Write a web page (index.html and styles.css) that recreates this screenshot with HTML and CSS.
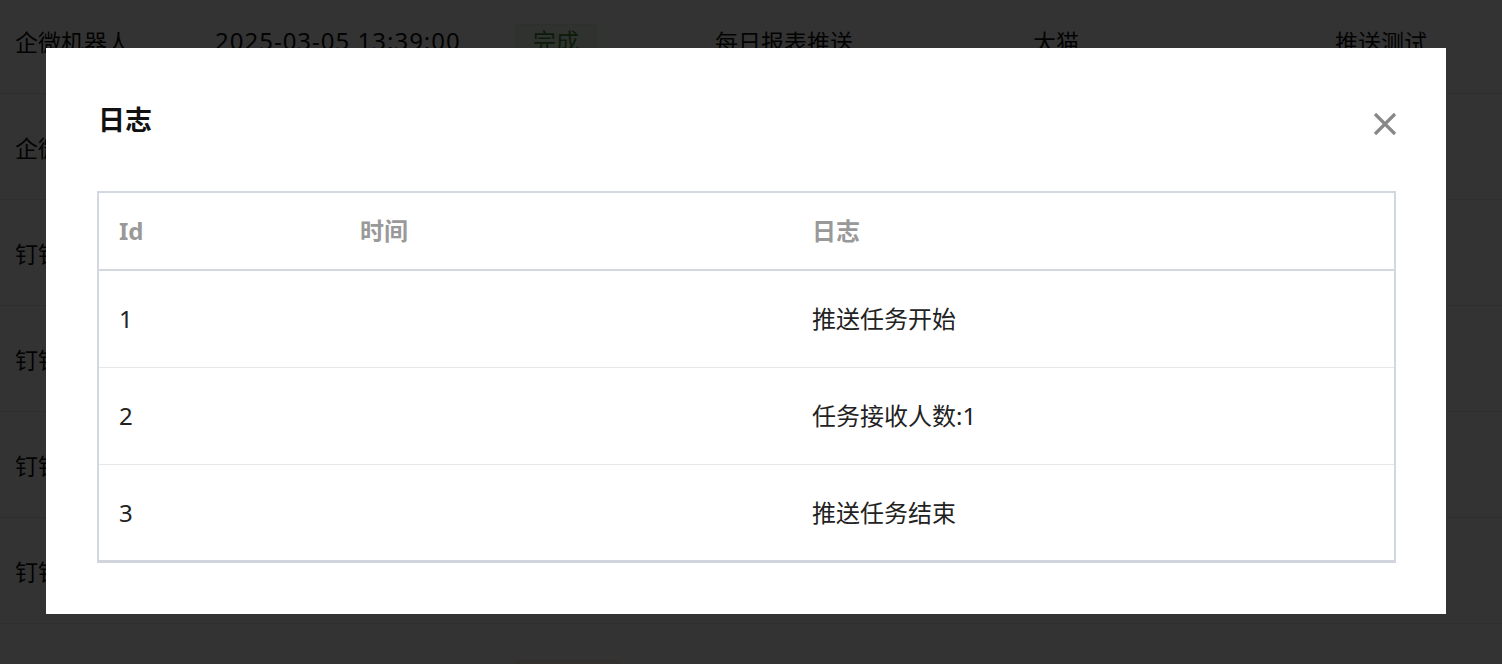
FILE: index.html
```html
<!DOCTYPE html>
<html lang="zh-CN">
<head>
  <meta charset="UTF-8">
  <meta name="viewport" content="width=device-width, initial-scale=1.0">
  <title>推送记录</title>
  <link rel="stylesheet" href="styles.css">
</head>
<body>
  <div class="page">
    <div class="bg-row">
      <span>企微机器人</span><span class="time">2025-03-05 13:39:00</span><span><em class="tag tag-ok">完成</em></span><span>每日报表推送</span><span>大猫</span><span>推送测试</span>
    </div>
    <div class="bg-row">
      <span>企微机器人</span><span class="time">2025-03-05 13:20:00</span><span><em class="tag tag-ok">完成</em></span><span>每日报表推送</span><span>大猫</span><span>推送测试</span>
    </div>
    <div class="bg-row">
      <span>钉钉机器人</span><span class="time">2025-03-05 12:00:00</span><span><em class="tag tag-ok">完成</em></span><span>每日报表推送</span><span>大猫</span><span>推送测试</span>
    </div>
    <div class="bg-row">
      <span>钉钉机器人</span><span class="time">2025-03-05 11:00:00</span><span><em class="tag tag-ok">完成</em></span><span>每日报表推送</span><span>大猫</span><span>推送测试</span>
    </div>
    <div class="bg-row">
      <span>钉钉机器人</span><span class="time">2025-03-05 10:00:00</span><span><em class="tag tag-ok">完成</em></span><span>每日报表推送</span><span>大猫</span><span>推送测试</span>
    </div>
    <div class="bg-row">
      <span>钉钉机器人</span><span class="time">2025-03-05 09:00:00</span><span><em class="tag tag-ok">完成</em></span><span>每日报表推送</span><span>大猫</span><span>推送测试</span>
    </div>
    <div class="bg-row">
      <span>钉钉机器人</span><span class="time">2025-03-05 08:00:00</span><span><em class="tag tag-warn">进行中</em></span><span>每日报表推送</span><span>大猫</span><span>推送测试</span>
    </div>
  </div>

  <div class="overlay">
    <div class="modal">
      <div class="modal-head">
        <h2>日志</h2>
        <button class="close" type="button" aria-label="关闭">
          <svg width="24" height="24" viewBox="0 0 24 24"><path d="M2 2 L22 22 M22 2 L2 22" stroke="#888" stroke-width="3.2" fill="none"/></svg>
        </button>
      </div>

      <div class="log-table">
        <div class="log-row log-header">
          <div>Id</div><div>时间</div><div>日志</div>
        </div>
        <div class="log-row">
          <div>1</div><div></div><div>推送任务开始</div>
        </div>
        <div class="log-row">
          <div>2</div><div></div><div>任务接收人数:1</div>
        </div>
        <div class="log-row">
          <div>3</div><div></div><div>推送任务结束</div>
        </div>
      </div>
    </div>
  </div>
</body>
</html>
```

FILE: styles.css
```css
* { box-sizing: border-box; }
body { margin: 0; background: #fff; color: #111; font-family: "Noto Sans", "Noto Sans CJK SC", sans-serif; font-size: 23px; overflow: hidden; }

.page { margin-top: -12px; height: 676px; overflow: hidden; }
.bg-row { display: grid; grid-template-columns: 200px 300px 200px 318px 302px 1fr; align-items: center; height: 106px; padding-left: 15px; border-bottom: 1px solid #e6e6e6; }
.bg-row .time { font-size: 24px; letter-spacing: 1px; }
.tag { display: inline-block; font-style: normal; height: 34px; line-height: 32px; padding: 0 17px; border-radius: 3px; font-size: 23px; }
.tag-ok { background: #eef8ea; border: 1px solid #e1f3d8; color: #3f8a32; }
.tag-warn { background: #fdf6ec; border: 1px solid #faecd8; color: #e6a23c; }

.overlay { position: fixed; inset: 0; background: rgba(0,0,0,0.8); padding: 48px 0 0 46px; }
.modal { width: 1400px; background: #fff; padding: 50px 50px 51px 51px; }
.modal-head { display: flex; align-items: center; justify-content: space-between; height: 44px; margin-bottom: 49px; }
.modal-head h2 { margin: 0 0 0 1px; font-size: 27px; font-weight: bold; color: #111; line-height: 44px; }
.close { border: 0; background: none; padding: 0; margin: 8px -1px 0 0; width: 24px; height: 24px; display: flex; cursor: pointer; }

.log-table { border: 2px solid #d3d7e0; border-bottom: 3px solid #cfd4dd; }
.log-row { display: grid; grid-template-columns: 241px 452px 1fr; align-items: center; height: 97px; padding-left: 20px; border-bottom: 1px solid #e6e6eb; color: #222; font-size: 24px; line-height: 30px; }
.log-row:last-child { border-bottom: 0; height: 95px; }
.log-header { height: 78px; border-bottom: 2px solid #d3d7e0; color: #999; font-weight: bold; }
```
